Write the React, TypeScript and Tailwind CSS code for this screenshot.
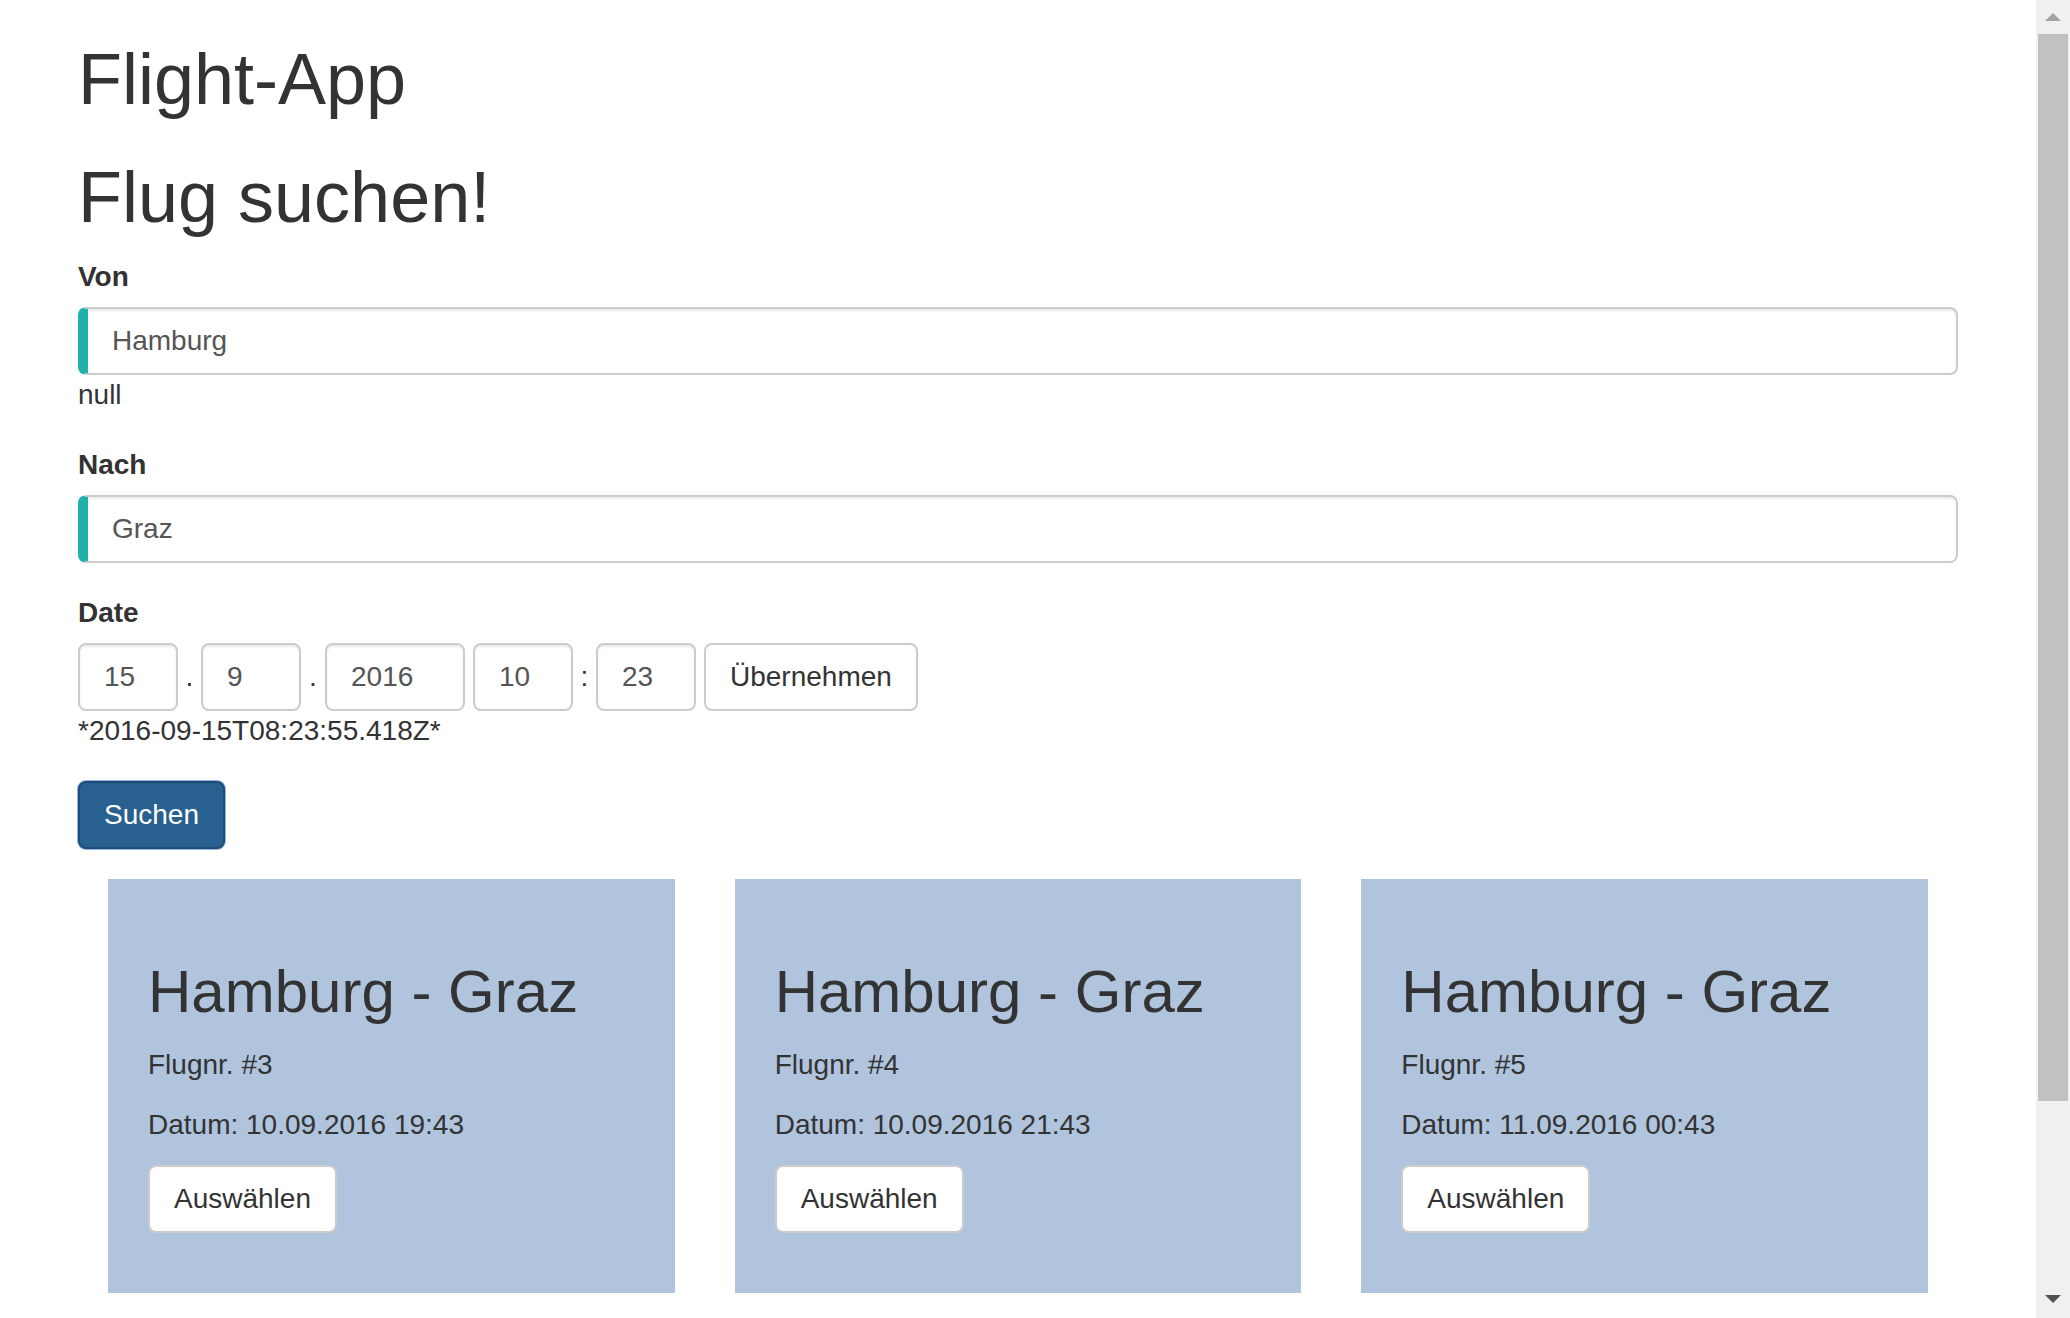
import React from 'react';

interface Flight {
  id: number;
  from: string;
  to: string;
  date: string;
}

const flights: Flight[] = [
  { id: 3, from: 'Hamburg', to: 'Graz', date: '10.09.2016 19:43' },
  { id: 4, from: 'Hamburg', to: 'Graz', date: '10.09.2016 21:43' },
  { id: 5, from: 'Hamburg', to: 'Graz', date: '11.09.2016 00:43' },
];

const inputBase =
  'h-[68px] rounded-[8px] border-2 border-[#ccc] bg-white px-[24px] text-[28px] text-[#555] shadow-[inset_0_2px_2px_rgba(0,0,0,0.075)] outline-none';

const btnDefault =
  'h-[68px] rounded-[8px] border-2 border-[#ccc] bg-white px-[24px] text-[28px] leading-[40px] text-[#333]';

const Scrollbar = () => (
  <div className="flex h-screen w-[34px] shrink-0 flex-col bg-[#f0f0f0]">
    <div className="flex h-[34px] items-center justify-center">
      <svg width="16" height="8" viewBox="0 0 16 8">
        <polygon points="0,8 8,0 16,8" fill="#a3a3a3" />
      </svg>
    </div>
    <div className="mx-[2px] h-[1067px] bg-[#c1c1c1]" />
    <div className="flex-1" />
    <div className="flex h-[38px] items-center justify-center">
      <svg width="16" height="8" viewBox="0 0 16 8">
        <polygon points="0,0 16,0 8,8" fill="#505050" />
      </svg>
    </div>
  </div>
);

const ValidInput = ({ value }: { value: string }) => (
  <input
    defaultValue={value}
    className={`${inputBase} block w-full border-l-[10px] border-l-[#20b2aa]`}
  />
);

const App = () => {
  return (
    <div className="flex h-screen overflow-hidden bg-white font-['Liberation_Sans',Arial,sans-serif] text-[28px] leading-[40px] text-[#333]">
      <main className="h-screen flex-1 overflow-hidden">
        <div className="mx-auto w-[1940px] px-[30px]">
          <h1 className="mt-[40px] mb-[20px] text-[72px] leading-[1.1]">Flight-App</h1>
          <h1 className="mt-[39px] mb-[20px] text-[72px] leading-[1.1]">Flug suchen!</h1>

          <div className="mb-[30px]">
            <label className="mb-[10px] inline-block font-bold">Von</label>
            <ValidInput value="Hamburg" />
            <div>null</div>
          </div>

          <div className="mb-[30px]">
            <label className="mb-[10px] inline-block font-bold">Nach</label>
            <ValidInput value="Graz" />
          </div>

          <div className="mb-[30px]">
            <label className="mb-[10px] inline-block font-bold">Date</label>
            <div className="flex items-baseline">
              <input defaultValue="15" className={`${inputBase} w-[100px]`} />
              <span className="w-[23px] text-center">.</span>
              <input defaultValue="9" className={`${inputBase} w-[100px]`} />
              <span className="w-[24px] text-center">.</span>
              <input defaultValue="2016" className={`${inputBase} w-[140px]`} />
              <span className="w-[8px]" />
              <input defaultValue="10" className={`${inputBase} w-[100px]`} />
              <span className="w-[23px] text-center">:</span>
              <input defaultValue="23" className={`${inputBase} w-[100px]`} />
              <span className="w-[8px]" />
              <button className={btnDefault}>Übernehmen</button>
            </div>
            <div>*2016-09-15T08:23:55.418Z*</div>
          </div>

          <div className="mb-[30px]">
            <button className="h-[68px] rounded-[8px] border-2 border-[#204d74] bg-[#286090] px-[24px] text-[28px] leading-[40px] text-white ring-1 ring-[#8fb4ec]">
              Suchen
            </button>
          </div>

          <div className="grid grid-cols-3 gap-x-[60px] px-[30px]">
            {flights.map(f => (
              <div key={f.id} className="bg-[#b0c4de] p-[40px]">
                <h2 className="mt-[40px] mb-[20px] text-[60px] leading-[1.1]">
                  {f.from} - {f.to}
                </h2>
                <p className="mb-[20px]">Flugnr. #{f.id}</p>
                <p className="mb-[20px]">Datum: {f.date}</p>
                <p className="mb-[20px]">
                  <button className={btnDefault}>Auswählen</button>
                </p>
              </div>
            ))}
          </div>
        </div>
      </main>
      <Scrollbar />
    </div>
  );
};

export default App;
